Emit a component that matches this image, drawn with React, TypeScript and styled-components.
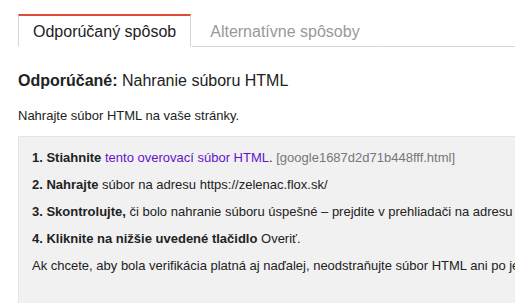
import React from 'react';
import styled, {createGlobalStyle} from 'styled-components';

const GlobalStyle = createGlobalStyle`
    html, body {
        margin: 0;
        padding: 0;
        background: #ffffff;
        overflow: hidden;
    }
    body {
        font-family: "Liberation Sans", Arial, sans-serif;
        color: #222222;
    }
`

const Page = styled.div`
    width: 515px;
    height: 303px;
    padding: 14px 0 0 18px;
    box-sizing: border-box;
    overflow: hidden;
`
const TabBar = styled.div`
    display: flex;
    align-items: flex-end;
    width: 600px;
`
const Tab = styled.div<{ active : boolean; }>`
    height: 33px;
    box-sizing: border-box;
    display: flex;
    align-items: center;
    font-size: 16px;
    white-space: nowrap;
    padding: 1px ${props => props.active ? '14px' : '18px'} 0;
    color: ${props => props.active ? '#222222' : '#999999'};
    border-top: 2px solid ${props => props.active ? '#dd4b39' : 'transparent'};
    border-left: 1px solid ${props => props.active ? '#d6d6d6' : 'transparent'};
    border-right: 1px solid ${props => props.active ? '#d6d6d6' : 'transparent'};
    border-bottom: 1px solid ${props => props.active ? 'transparent' : '#d6d6d6'};
`
const TabFill = styled.div`
    flex: 1;
    height: 33px;
    box-sizing: border-box;
    border-bottom: 1px solid #d6d6d6;
`
const Heading = styled.h2`
    margin: 24px 0 0;
    font-size: 16px;
    font-weight: 400;
    line-height: 20px;
    white-space: nowrap;
    b {
        font-weight: 700;
    }
`
const Intro = styled.p`
    margin: 16px 0 0;
    font-size: 13px;
    line-height: 17px;
    white-space: nowrap;
`
const StepsBox = styled.div`
    margin-top: 12px;
    width: 560px;
    background: #f1f1f1;
    border: 1px solid #e5e5e5;
    padding: 12px 13px 21px;
    box-sizing: border-box;
`
const Step = styled.p`
    margin: 0 0 10px;
    font-size: 13px;
    line-height: 17px;
    white-space: nowrap;
`
const Link = styled.a`
    color: #6611cc;
    text-decoration: none;
`
const FileName = styled.span`
    color: #777777;
`

function App(){
    return(
        <Page>
            <GlobalStyle />
            <TabBar>
                <Tab active={true}>Odporúčaný spôsob</Tab>
                <Tab active={false}>Alternatívne spôsoby</Tab>
                <TabFill />
            </TabBar>
            <Heading><b>Odporúčané:</b> Nahranie súboru HTML</Heading>
            <Intro>Nahrajte súbor HTML na vaše stránky.</Intro>
            <StepsBox>
                <Step><b>1. Stiahnite</b> <Link href="#">tento overovací súbor HTML</Link>. <FileName>[google1687d2d71b448fff.html]</FileName></Step>
                <Step><b>2. Nahrajte</b> súbor na adresu https://zelenac.flox.sk/</Step>
                <Step><b>3. Skontrolujte,</b> či bolo nahranie súboru úspešné – prejdite v prehliadači na adresu https://zelenac.flox.sk/google1687d2d71b448fff.html.</Step>
                <Step><b>4. Kliknite na nižšie uvedené tlačidlo</b> Overiť.</Step>
                <Step>Ak chcete, aby bola verifikácia platná aj naďalej, neodstraňujte súbor HTML ani po jej úspešnom dokončení.</Step>
            </StepsBox>
        </Page>
    );
}

export default App;
